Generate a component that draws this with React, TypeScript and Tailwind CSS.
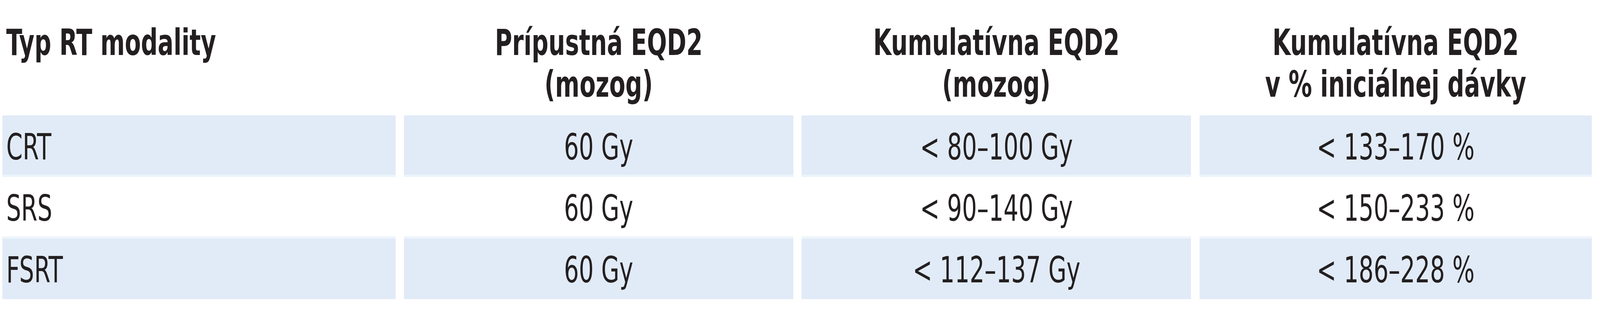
import { useLayoutEffect, useState } from "react"

const FONT =
  "font-['DejaVu_Sans_Condensed','Liberation_Sans_Narrow','Liberation_Sans',sans-serif]"

const HEADERS = [
  ["Typ RT modality"],
  ["Prípustná EQD2", "(mozog)"],
  ["Kumulatívna EQD2", "(mozog)"],
  ["Kumulatívna EQD2", "v % iniciálnej dávky"],
]

const ROWS = [
  {
    cells: ["CRT", "60 Gy", "< 80–100 Gy", "< 133–170 %"],
    cls: "h-[158px] bg-[#e1ebf7] border-b-[6px] border-[#edf4fb] pt-[12px]",
  },
  {
    cells: ["SRS", "60 Gy", "< 90–140 Gy", "< 150–233 %"],
    cls: "h-[152px] bg-white pt-[9px]",
  },
  {
    cells: ["FSRT", "60 Gy", "< 112–137 Gy", "< 186–228 %"],
    cls: "h-[161px] bg-[#e1ebf7] border-t-[6px] border-[#edf4fb] pt-[6px]",
  },
]

// column widths follow the 5029px frame proportionally
const COLS = "grid grid-cols-[1237fr_1224fr_1224fr_1233fr] gap-x-[0.52vw]"

// the table was typeset in a condensed face; squeeze our text to the same width
const SQUEEZE = 0.89

function useSqueeze() {
  const [k, setK] = useState(SQUEEZE)
  useLayoutEffect(() => {
    const update = () =>
      setK((SQUEEZE * document.documentElement.clientWidth) / 5029)
    update()
    window.addEventListener("resize", update)
    return () => window.removeEventListener("resize", update)
  }, [])
  return k
}

function Txt({ children, k, left }: { children: string; k: number; left?: boolean }) {
  return (
    <span
      className={`inline-block whitespace-nowrap ${left ? "origin-left" : "origin-center"}`}
      style={{ transform: `scaleX(${k})` }}
    >
      {children}
    </span>
  )
}

export default function App() {
  const k = useSqueeze()

  return (
    <div className={`w-full h-[800px] bg-white pl-[0.14vw] pr-[0.52vw] text-[#231f20] ${FONT}`}>
      {/* header */}
      <div className={`${COLS} h-[296px]`}>
        {HEADERS.map((lines, i) => (
          <div
            key={i}
            className={`pt-[56px] text-[92px] leading-[107px] font-bold ${
              i === 0 ? "pl-[0.26vw] text-left" : "text-center"
            }`}
          >
            {lines.map((l) => (
              <div key={l}>
                <Txt k={k} left={i === 0}>
                  {l}
                </Txt>
              </div>
            ))}
          </div>
        ))}
      </div>

      {/* body */}
      {ROWS.map((row) => (
        <div key={row.cells[0]} className={COLS}>
          {row.cells.map((c, i) => (
            <div
              key={i}
              className={`flex items-center text-[92px] leading-none ${row.cls} ${
                i === 0 ? "pl-[0.26vw] justify-start" : "justify-center"
              }`}
            >
              <Txt k={k} left={i === 0}>
                {c}
              </Txt>
            </div>
          ))}
        </div>
      ))}
    </div>
  )
}
